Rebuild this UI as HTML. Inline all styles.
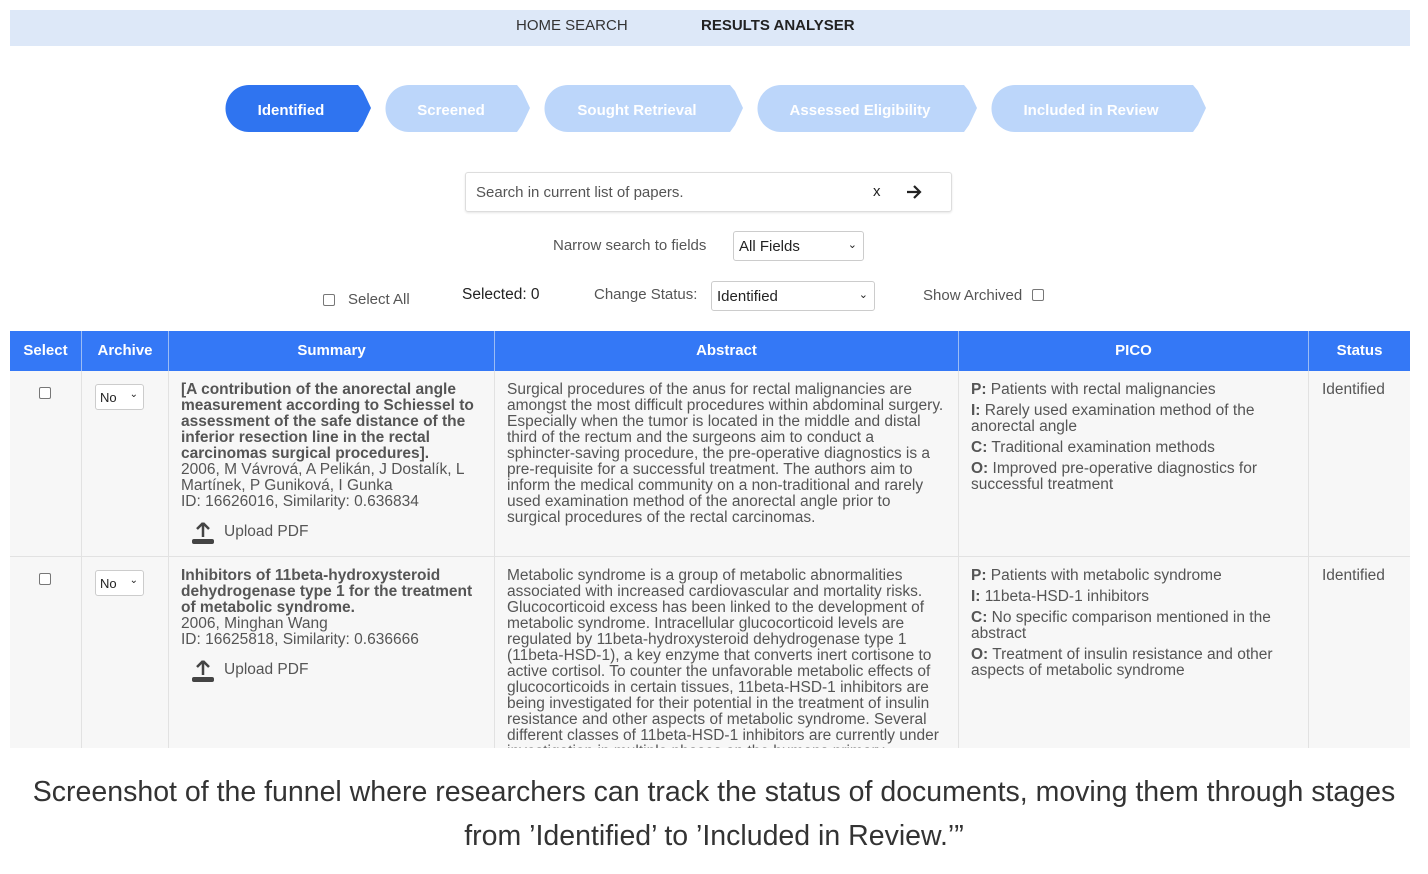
<!DOCTYPE html>
<html><head><meta charset="utf-8"><style>
*{margin:0;padding:0;box-sizing:border-box}
body{width:1428px;height:874px;background:#fff;font-family:"Liberation Sans",Arial,sans-serif;position:relative;overflow:hidden;color:#555}
.a{position:absolute;white-space:nowrap}
.nav{position:absolute;left:10px;top:10px;width:1400px;height:36px;background:#dde8f8}
.t{font-size:15.5px;line-height:16px;color:#555}
.b{font-weight:bold}
.hd{position:absolute;top:331px;height:40px;background:#3478f6;color:#fff;font-weight:bold;font-size:15px;line-height:40px;text-align:center;border-right:1px solid #9bbcf5}
.cell{position:absolute;background:#f7f7f7;border-right:1px solid #e2e2e2;border-bottom:1px solid #e2e2e2}
.sel{position:absolute;border:1px solid #ccc;border-radius:3px;background:#fff;font-size:15px;color:#222}
.cb{position:absolute;width:12px;height:12px;border:1.5px solid #777;border-radius:2px;background:#fff}
</style></head><body>
<div class="nav"></div>
<div class="a" style="left:516px;top:17px;font-size:15px;color:#333">HOME SEARCH</div>
<div class="a" style="left:701px;top:17px;font-size:15px;color:#222;font-weight:bold">RESULTS ANALYSER</div>

<svg class="a" style="left:0;top:0" width="1428" height="150">
<g>
<path d="M249 85 H358 L363 91 L371 108 L363 125 L358 132 H249 A23 23 0 0 1 249 85Z" fill="#2f74f0"/>
<path d="M409 85 H517 L522 91 L530 108 L522 125 L517 132 H409 A23 23 0 0 1 409 85Z" fill="#bcd6fa"/>
<path d="M568 85 H730 L735 91 L743 108 L735 125 L730 132 H568 A23 23 0 0 1 568 85Z" fill="#bcd6fa"/>
<path d="M781 85 H964 L969 91 L977 108 L969 125 L964 132 H781 A23 23 0 0 1 781 85Z" fill="#bcd6fa"/>
<path d="M1015 85 H1193 L1198 91 L1206 108 L1198 125 L1193 132 H1015 A23 23 0 0 1 1015 85Z" fill="#bcd6fa"/>
</g>
<g font-family="Liberation Sans,Arial,sans-serif" font-weight="bold" font-size="15" fill="#fff" text-anchor="middle">
<text x="291" y="115">Identified</text>
<text x="451" y="115">Screened</text>
<text x="637" y="115">Sought Retrieval</text>
<text x="860" y="115">Assessed Eligibility</text>
<text x="1091" y="115">Included in Review</text>
</g>
</svg>

<div class="a" style="left:465px;top:172px;width:487px;height:40px;border:1px solid #ddd;border-radius:3px;box-shadow:0 1px 2px rgba(0,0,0,.1)"></div>
<div class="a" style="left:476px;top:184px;font-size:15px;color:#555">Search in current list of papers.</div>
<div class="a" style="left:873px;top:183px;font-size:15px;color:#222">x</div>
<svg class="a" style="left:906px;top:185px" width="16" height="14" viewBox="0 0 16 14"><path d="M1 7 H14 M8 1 L14 7 L8 13" stroke="#222" stroke-width="2.2" fill="none"/></svg>

<div class="a" style="left:553px;top:237px;font-size:15px;color:#555">Narrow search to fields</div>
<div class="sel" style="left:733px;top:231px;width:131px;height:30px;padding:6px 5px">All Fields<span style="position:absolute;right:6px;top:6px;font-size:11px">⌄</span></div>

<div class="cb" style="left:323px;top:294px"></div>
<div class="a" style="left:348px;top:291px;font-size:15px;color:#555">Select All</div>
<div class="a" style="left:462px;top:286px;font-size:15.5px;color:#222">Selected: 0</div>
<div class="a" style="left:594px;top:286px;font-size:15px;color:#555">Change Status:</div>
<div class="sel" style="left:711px;top:281px;width:164px;height:30px;padding:6px 5px">Identified<span style="position:absolute;right:6px;top:6px;font-size:11px">⌄</span></div>
<div class="a" style="left:923px;top:287px;font-size:15px;color:#555">Show Archived</div>
<div class="cb" style="left:1032px;top:289px"></div>

<div class="hd" style="left:10px;width:72px">Select</div>
<div class="hd" style="left:82px;width:87px">Archive</div>
<div class="hd" style="left:169px;width:326px">Summary</div>
<div class="hd" style="left:495px;width:464px">Abstract</div>
<div class="hd" style="left:959px;width:350px">PICO</div>
<div class="hd" style="left:1309px;width:101px;border-right:none">Status</div>

<div class="cell" style="left:10px;top:371px;width:72px;height:186px"></div>
<div class="cell" style="left:82px;top:371px;width:87px;height:186px"></div>
<div class="cell" style="left:169px;top:371px;width:326px;height:186px"></div>
<div class="cell" style="left:495px;top:371px;width:464px;height:186px"></div>
<div class="cell" style="left:959px;top:371px;width:350px;height:186px"></div>
<div class="cell" style="left:1309px;top:371px;width:101px;height:186px;border-right:none"></div>
<div class="cell" style="left:10px;top:557px;width:72px;height:191px;border-bottom:none"></div>
<div class="cell" style="left:82px;top:557px;width:87px;height:191px;border-bottom:none"></div>
<div class="cell" style="left:169px;top:557px;width:326px;height:191px;border-bottom:none"></div>
<div class="cell" style="left:495px;top:557px;width:464px;height:191px;border-bottom:none"></div>
<div class="cell" style="left:959px;top:557px;width:350px;height:191px;border-bottom:none"></div>
<div class="cell" style="left:1309px;top:557px;width:101px;height:191px;border-right:none;border-bottom:none"></div>

<div class="cb" style="left:39px;top:387px"></div>
<div class="sel" style="left:95px;top:384px;width:49px;height:26px;font-size:13px;padding:5px 4px">No<span style="position:absolute;right:5px;top:4px;font-size:10px">⌄</span></div>
<div class="cb" style="left:39px;top:573px"></div>
<div class="sel" style="left:95px;top:570px;width:49px;height:26px;font-size:13px;padding:5px 4px">No<span style="position:absolute;right:5px;top:4px;font-size:10px">⌄</span></div>

<div class="a t" style="left:181px;top:382px"><span class="b" style="font-size:15.5px">[A contribution of the anorectal angle<br>measurement according to Schiessel to<br>assessment of the safe distance of the<br>inferior resection line in the rectal<br>carcinomas surgical procedures].</span><br>2006, M Vávrová, A Pelikán, J Dostalík, L<br>Martínek, P Guniková, I Gunka<br>ID: 16626016, Similarity: 0.636834</div>
<svg class="a" style="left:190px;top:520px" width="26" height="26" viewBox="0 0 26 26"><path d="M13 3 L7 9 M13 3 L19 9 M13 3 V17" stroke="#444" stroke-width="2.5" fill="none"/><rect x="2" y="19" width="22" height="5" rx="2" fill="#444"/></svg>
<div class="a" style="left:224px;top:523px;font-size:15.5px;color:#555">Upload PDF</div>

<div class="a t" style="left:181px;top:568px"><span class="b" style="font-size:15.5px">Inhibitors of 11beta-hydroxysteroid<br>dehydrogenase type 1 for the treatment<br>of metabolic syndrome.</span><br>2006, Minghan Wang<br>ID: 16625818, Similarity: 0.636666</div>
<svg class="a" style="left:190px;top:658px" width="26" height="26" viewBox="0 0 26 26"><path d="M13 3 L7 9 M13 3 L19 9 M13 3 V17" stroke="#444" stroke-width="2.5" fill="none"/><rect x="2" y="19" width="22" height="5" rx="2" fill="#444"/></svg>
<div class="a" style="left:224px;top:661px;font-size:15.5px;color:#555">Upload PDF</div>

<div class="a t" style="left:507px;top:382px">Surgical procedures of the anus for rectal malignancies are<br>amongst the most difficult procedures within abdominal surgery.<br>Especially when the tumor is located in the middle and distal<br>third of the rectum and the surgeons aim to conduct a<br>sphincter-saving procedure, the pre-operative diagnostics is a<br>pre-requisite for a successful treatment. The authors aim to<br>inform the medical community on a non-traditional and rarely<br>used examination method of the anorectal angle prior to<br>surgical procedures of the rectal carcinomas.</div>
<div class="a t" style="left:507px;top:568px;height:180px;overflow:hidden">Metabolic syndrome is a group of metabolic abnormalities<br>associated with increased cardiovascular and mortality risks.<br>Glucocorticoid excess has been linked to the development of<br>metabolic syndrome. Intracellular glucocorticoid levels are<br>regulated by 11beta-hydroxysteroid dehydrogenase type 1<br>(11beta-HSD-1), a key enzyme that converts inert cortisone to<br>active cortisol. To counter the unfavorable metabolic effects of<br>glucocorticoids in certain tissues, 11beta-HSD-1 inhibitors are<br>being investigated for their potential in the treatment of insulin<br>resistance and other aspects of metabolic syndrome. Several<br>different classes of 11beta-HSD-1 inhibitors are currently under<br>investigation in multiple phases on the humans primary</div>

<div class="a t" style="left:971px;top:382px"><b>P:</b> Patients with rectal malignancies</div>
<div class="a t" style="left:971px;top:403px"><b>I:</b> Rarely used examination method of the<br>anorectal angle</div>
<div class="a t" style="left:971px;top:440px"><b>C:</b> Traditional examination methods</div>
<div class="a t" style="left:971px;top:461px"><b>O:</b> Improved pre-operative diagnostics for<br>successful treatment</div>
<div class="a t" style="left:971px;top:568px"><b>P:</b> Patients with metabolic syndrome</div>
<div class="a t" style="left:971px;top:589px"><b>I:</b> 11beta-HSD-1 inhibitors</div>
<div class="a t" style="left:971px;top:610px"><b>C:</b> No specific comparison mentioned in the<br>abstract</div>
<div class="a t" style="left:971px;top:647px"><b>O:</b> Treatment of insulin resistance and other<br>aspects of metabolic syndrome</div>

<div class="a t" style="left:1322px;top:382px">Identified</div>
<div class="a t" style="left:1322px;top:568px">Identified</div>

<div class="a" style="left:0;top:770px;width:1428px;text-align:center;font-size:28.5px;line-height:44px;color:#333">Screenshot of the funnel where researchers can track the status of documents, moving them through stages<br>from ’Identified’ to ’Included in Review.’”</div>
</body></html>
